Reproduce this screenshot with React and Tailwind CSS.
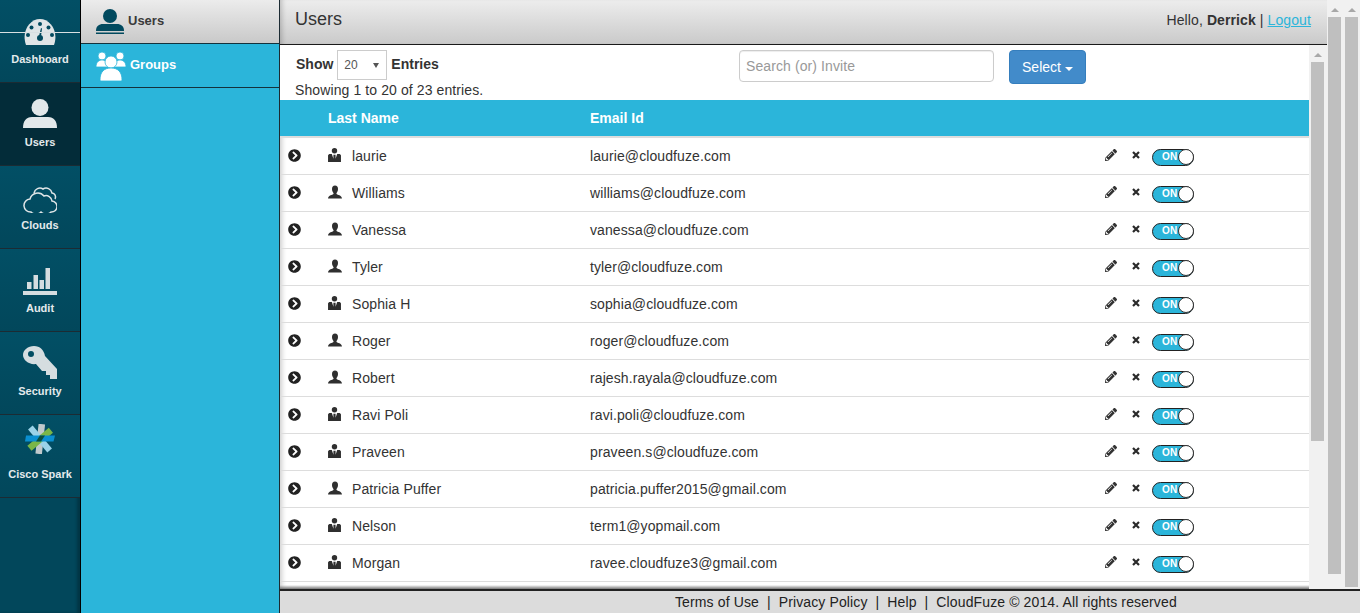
import React from "react";
import { FaPencilAlt, FaChevronCircleRight } from "react-icons/fa";

const USERS = [
  { name: "laurie", email: "laurie@cloudfuze.com", admin: true },
  { name: "Williams", email: "williams@cloudfuze.com" },
  { name: "Vanessa", email: "vanessa@cloudfuze.com" },
  { name: "Tyler", email: "tyler@cloudfuze.com" },
  { name: "Sophia H", email: "sophia@cloudfuze.com", admin: true },
  { name: "Roger", email: "roger@cloudfuze.com" },
  { name: "Robert", email: "rajesh.rayala@cloudfuze.com" },
  { name: "Ravi Poli", email: "ravi.poli@cloudfuze.com", admin: true },
  { name: "Praveen", email: "praveen.s@cloudfuze.com", admin: true },
  { name: "Patricia Puffer", email: "patricia.puffer2015@gmail.com" },
  { name: "Nelson", email: "term1@yopmail.com", admin: true },
  { name: "Morgan", email: "ravee.cloudfuze3@gmail.com", admin: true },
];

function GaugeIcon() {
  return (
    <svg width="34" height="27" viewBox="0 0 34 27">
      <path d="M3 27C-2 13 7 1 17 1s19 12 14 26z" fill="#dfe5e7" />
      <g fill="#024a5f">
        <circle cx="17" cy="6" r="2" />
        <circle cx="8.500" cy="9.500" r="2" />
        <circle cx="25.500" cy="9.500" r="2" />
        <circle cx="5" cy="17" r="2" />
        <circle cx="29" cy="17" r="2" />
        <circle cx="17" cy="20" r="3" />
        <path d="M16 18l2-8 1 .5-1 8z" />
      </g>
    </svg>
  );
}

function PersonIcon({ color = "#e2e8ea" }) {
  return (
    <svg width="34" height="29" viewBox="0 0 34 29">
      <circle cx="17" cy="8.500" r="8.500" fill={color} />
      <path d="M0 29c0-7 3-11 9-11h16c6 0 9 4 9 11z" fill={color} />
    </svg>
  );
}

function CloudsIcon() {
  return (
    <svg width="34" height="27" viewBox="0 0 34 27" fill="none" stroke="#dfe5e7" strokeWidth="1.500">
      <path d="M8 26a6.500 6.500 0 0 1-1-13a8 8 0 0 1 14-3a6 6 0 0 1 8 5a5.500 5.500 0 0 1-1 11a7 7 0 0 1-10 0a7 7 0 0 1-10 0z" />
      <path d="M11 7a6 6 0 0 1 9-4a6 6 0 0 1 9 4a4 4 0 0 1 3 6" />
    </svg>
  );
}

function BarsIcon() {
  return (
    <svg width="34" height="27" viewBox="0 0 34 27" fill="#d5dde0">
      <rect x="4" y="14" width="4.500" height="7" />
      <rect x="10.500" y="7" width="4.500" height="14" />
      <rect x="16.500" y="12" width="4.500" height="9" />
      <rect x="22.500" y="0" width="4.500" height="21" />
      <rect x="0" y="23" width="34" height="4" />
    </svg>
  );
}

function KeyIcon() {
  return (
    <svg width="34" height="33" viewBox="0 0 34 33">
      <path
        fillRule="evenodd"
        fill="#d5dde0"
        d="M11 0c6 0 10 4 11 10l12 13v10h-7v-4h-4v-4h-4l-6-7C6 19 0 14 0 9c0-5 5-9 11-9zM8 5a3 3 0 1 0 0 6 3 3 0 0 0 0-6z"
      />
    </svg>
  );
}

function SparkIcon() {
  return (
    <svg width="30" height="30" viewBox="0 0 30 30">
      <rect x="12" y="0" width="6.500" height="30" fill="#c0c9cc" transform="rotate(6 15 15)" />
      <rect x="12" y="0" width="6" height="30" fill="#9ad2e8" transform="rotate(-40 15 15)" />
      <rect x="12" y="1" width="6.500" height="28" fill="#7ab648" transform="rotate(50 15 15)" />
      <path d="M1 11.500h29l-1.500 6H0z" fill="#0a8fd0" />
      <path d="M11 17.500l4-6h5l-4 6z" fill="#0b4f3f" />
    </svg>
  );
}

function RowUserIcon({ admin }) {
  if (admin) {
    return (
      <svg width="13" height="14" viewBox="0 0 12 13" fill="#2f2f2f">
        <circle cx="6" cy="2.500" r="2.500" />
        <path d="M0 13V7c0-1 1-1.500 2-1.500h1.500L5 10V6.200h2V10l1.500-4.500H10c1 0 2 .5 2 1.500v6z" />
      </svg>
    );
  }
  return (
    <svg width="14" height="14" viewBox="0 0 14 13" fill="#2f2f2f">
      <path d="M7 0c2 0 3 1.500 3 3.500S9 7 8.500 7.500v1c1 1 5 1 5.500 4.500H0c.5-3.500 4.500-3.500 5.500-4.500v-1C5 7 4 5.500 4 3.500S5 0 7 0z" />
    </svg>
  );
}

function RemoveIcon() {
  return (
    <svg className="mb-[3px] block" width="8" height="8" viewBox="0 0 8 8" fill="none" stroke="#2a2a2a" strokeWidth="2.200">
      <path d="M1 1l6 6M7 1l-6 6" />
    </svg>
  );
}

function Toggle() {
  return (
    <div className="flex h-[17px] w-[42px] translate-y-[1px] items-center justify-between rounded-full border border-[#222] bg-[#2bb5da] text-[10px] font-bold text-white">
      <span className="pl-[9px] leading-none">ON</span>
      <span className="-mr-px h-[16px] w-[16px] rounded-full border border-[#333] bg-white" />
    </div>
  );
}

function ScrollStrip({ thumbHeight }) {
  return (
    <div className="flex h-full w-[13px] flex-col items-center">
      <div className="mt-[8px] h-0 w-0 border-x-[4px] border-b-[4px] border-x-transparent border-b-[#a8a8a8]" />
      <div className={`mt-[5px] w-[13px] bg-[#bfbfbf] ${thumbHeight}`} />
    </div>
  );
}

const NAV = [
  { label: "Dashboard", icon: <GaugeIcon />, box: "pb-[2px]" },
  { label: "Users", icon: <PersonIcon />, active: true, box: "pb-[2px]" },
  { label: "Clouds", icon: <CloudsIcon />, box: "pb-0" },
  { label: "Audit", icon: <BarsIcon />, box: "pb-[1px]" },
  { label: "Security", icon: <KeyIcon />, box: "pb-0" },
  { label: "Cisco Spark", icon: <SparkIcon />, box: "pb-[8px]" },
];

const FOOTER = "Terms of Use \u00a0|\u00a0 Privacy Policy \u00a0|\u00a0 Help \u00a0|\u00a0 CloudFuze © 2014. All rights reserved";

export default function App() {
  return (
    <div className="flex h-[613px] w-[1360px] overflow-hidden bg-white font-['Liberation_Sans',Arial,sans-serif] text-sm text-[#333]">
      {/* main icon nav */}
      <div className="relative flex w-[81px] shrink-0 flex-col border-r border-black bg-[#02475b] shadow-[inset_-3px_0_3px_rgba(0,0,0,0.25)]">
        {NAV.map((item) => (
          <div
            key={item.label}
            className={`flex h-[83px] flex-col items-center border-b border-[#1c2b33] ${
              item.active ? "bg-[#032c39]" : "bg-gradient-to-b from-[#024f65] to-[#02475b]"
            }`}
          >
            <div className={`flex h-[47px] items-end ${item.box}`}>{item.icon}</div>
            <span className="mt-[5px] text-[11px] font-bold leading-[14px] text-[#e4eaec]">{item.label}</span>
          </div>
        ))}
        <div className="absolute left-0 top-[32px] h-px w-[80px] bg-[#d8dfe2]" />
      </div>

      {/* sub nav */}
      <div className="flex w-[199px] shrink-0 flex-col border-r border-[#1c2b33] bg-[#2bb5da]">
        <div className="flex h-[44px] items-center gap-[4px] border-b border-[#14323c] bg-gradient-to-b from-[#ececec] to-[#c9c9c9] pl-[15px] pb-[1px]">
          <svg width="28" height="25" viewBox="0 0 28 25" fill="#024a5f">
            <circle cx="14" cy="7" r="7" />
            <path d="M0 22c0-5 3-7 7-7h14c4 0 7 2 7 7z" />
            <rect y="23.500" width="28" height="1.500" />
          </svg>
          <span className="text-[13px] font-bold text-[#3a3a3a]">Users</span>
        </div>
        <div className="flex h-[44px] items-center gap-[4px] border-b border-[#14323c] pl-[15px]">
          <svg width="30" height="30" viewBox="0 0 30 30" fill="#fff" stroke="#2bb5da" strokeWidth="0.800">
            <circle cx="6" cy="5" r="4" />
            <circle cx="24" cy="5" r="4" />
            <path d="M0 16c0-5 3-7 6-7s6 2 6 7z" />
            <path d="M18 16c0-5 3-7 6-7s6 2 6 7z" />
            <circle cx="15" cy="11" r="6" />
            <path d="M4 29c0-8 4-12 11-12s11 4 11 12c0 .5-.5 1-1 1H5c-.5 0-1-.5-1-1z" />
          </svg>
          <span className="text-[13px] font-bold text-white">Groups</span>
        </div>
      </div>

      {/* right side */}
      <div className="flex min-w-0 flex-1 flex-col">
        <div className="flex h-[589px] bg-[#f1f1f1]">
          <div className="flex w-[1047px] shrink-0 flex-col">
            <div className="flex h-[45px] shrink-0 items-center justify-between border-b border-[#1a1a1a] bg-gradient-to-b from-[#ededed] to-[#cacaca] pl-[15px] pr-[16px] shadow-[inset_5px_0_5px_-3px_rgba(0,0,0,0.2)]">
              <h1 className="mb-[7px] text-[18px] font-normal leading-none">Users</h1>
              <div className="mb-[5px] text-sm tracking-[0.1px]">
                Hello, <b>Derrick</b> | <a className="text-[#2bb5da] underline">Logout</a>
              </div>
            </div>

            <div className="flex min-h-0 flex-1">
              <div className="flex w-[1029px] shrink-0 flex-col bg-white">
                {/* toolbar */}
                <div className="flex h-[55px] shrink-0 pt-[5px]">
                  <div className="w-[459px] shrink-0 pl-[15px]">
                    <div className="flex h-[30px] items-center">
                      <b className="mb-[2px] ml-[1px]">Show</b>
                      <div className="ml-[4px] flex h-[30px] w-[50px] items-center justify-between border border-[#ccc] pl-[6px] pr-[7px] text-xs text-[#555]">
                        20
                        <span className="h-0 w-0 border-x-[3px] border-t-[5px] border-x-transparent border-t-[#555]" />
                      </div>
                      <b className="mb-[2px] ml-[4px]">Entries</b>
                    </div>
                    <div className="mt-[2px] leading-[16px] tracking-[0.1px]">Showing 1 to 20 of 23 entries.</div>
                  </div>
                  <div className="flex h-[32px] w-[255px] items-center rounded border border-[#ccc] px-[6px] text-sm tracking-[0.1px] text-[#999] shadow-[inset_0_1px_1px_rgba(0,0,0,0.075)]">
                    Search (or) Invite
                  </div>
                  <div className="ml-[15px] flex h-[34px] w-[77px] items-center justify-center gap-[4px] rounded border border-[#357ebd] bg-[#428bca] text-sm text-white">
                    Select
                    <span className="mt-[4px] h-0 w-0 border-x-[4px] border-t-[4px] border-x-transparent border-t-white" />
                  </div>
                </div>

                {/* table head */}
                <div className="grid h-[38px] shrink-0 grid-cols-[48px_262px_1fr] items-center border-b-2 border-[#dddddd] bg-[#2bb5da] font-bold text-white">
                  <span />
                  <span className="pb-[1px]">Last Name</span>
                  <span className="pb-[1px]">Email Id</span>
                </div>

                {/* rows */}
                <div className="relative min-h-0 flex-1 overflow-hidden shadow-[inset_6px_0_5px_-4px_rgba(0,0,0,0.2)]">
                  {USERS.map((u) => (
                    <div
                      key={u.email}
                      className="grid h-[37px] grid-cols-[48px_24px_238px_515px_27px_20px_1fr] items-center border-b border-[#dddddd] tracking-[0.1px]"
                    >
                      <span className="pl-[8px]">
                        <FaChevronCircleRight className="mb-[2px] h-[13px] w-[13px] text-[#222]" />
                      </span>
                      <span className="flex pb-[3px]">
                        <RowUserIcon admin={u.admin} />
                      </span>
                      <span>{u.name}</span>
                      <span>{u.email}</span>
                      <span>
                        <FaPencilAlt className="mb-[2px] h-[12px] w-[12px] text-[#333]" />
                      </span>
                      <span>
                        <RemoveIcon />
                      </span>
                      <Toggle />
                    </div>
                  ))}
                  <div className="h-[37px] border-b border-[#dddddd]" />
                  <div className="absolute inset-x-0 bottom-0 h-[4px] bg-gradient-to-b from-transparent to-[#777]" />
                </div>
              </div>

              {/* inner scrollbar */}
              <div className="flex w-[18px] flex-col pl-[2px] pr-[3px]">
                <ScrollStrip thumbHeight="h-[379px]" />
              </div>
            </div>
          </div>

          {/* outer scrollbars */}
          <div className="flex h-full pl-[1px]">
            <ScrollStrip thumbHeight="h-[557px]" />
          </div>
          <div className="flex h-full pl-[4px]">
            <ScrollStrip thumbHeight="h-[570px]" />
          </div>
        </div>

        {/* footer */}
        <div className="flex h-[24px] shrink-0 items-center border-t-2 border-[#222] bg-[#dcdcdc] pl-[395px] text-[#222]">
          <span className="whitespace-nowrap tracking-[0.12px]">{FOOTER}</span>
        </div>
      </div>
    </div>
  );
}
